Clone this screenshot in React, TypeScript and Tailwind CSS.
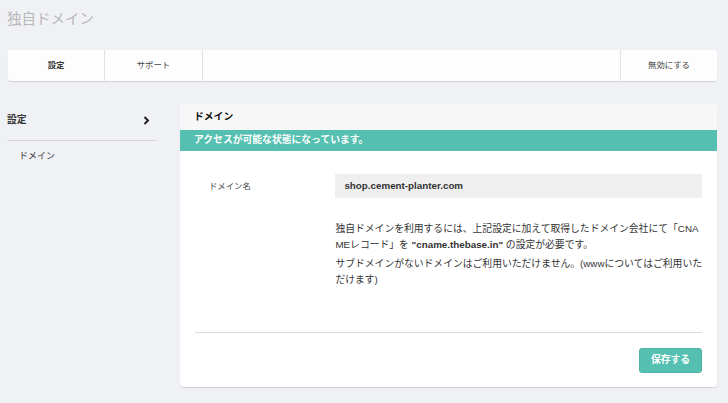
export default function App() {
  return (
    <div className="min-h-screen bg-[#f0f1f5] font-['Liberation_Sans','Noto_Sans_CJK_JP',sans-serif] text-[#333]">
      <div className="pl-[8px] pr-[11px]">
        <h1 className="h-[50px] pt-[9px] -ml-[1px] text-[14.5px] leading-[20px] text-[#b8b8b8]">独自ドメイン</h1>

        <nav className="flex h-[31px] rounded-[3px] bg-[#fdfdfd] shadow-[0_1px_1px_rgba(0,0,0,0.13)]">
          <a className="flex w-[97px] items-center justify-center border-r border-[#e3e3e3] text-[8.4px] font-bold text-[#333]">
            設定
          </a>
          <a className="flex w-[98px] items-center justify-center border-r border-[#e3e3e3] text-[8.4px] text-[#444]">
            サポート
          </a>
          <div className="flex-1" />
          <a className="flex w-[97px] items-center justify-center border-l border-[#e3e3e3] text-[8.4px] text-[#444]">
            無効にする
          </a>
        </nav>

        <div className="mt-[23px] flex">
          <aside className="-ml-[1px] w-[150px] shrink-0">
            <div className="flex h-[37px] items-center justify-between border-b border-[#d8d8d8] pb-[3px]">
              <span className="text-[9.8px] font-bold text-[#333]">設定</span>
              <svg width="7" height="9" viewBox="0 0 7 9" className="mr-[7px]">
                <path d="M1.5 1 L5 4.5 L1.5 8" fill="none" stroke="#222" strokeWidth="2" />
              </svg>
            </div>
            <div className="pl-[12px] pt-[9px] text-[9px] text-[#333]">ドメイン</div>
          </aside>

          <section className="ml-[23px] flex-1 overflow-hidden rounded-[4px] bg-white shadow-[0_1px_1px_rgba(0,0,0,0.13)]">
            <header className="flex h-[26px] items-center bg-[#f7f7f7] px-[14px] pt-[1px] text-[9.8px] font-bold text-[#111]">
              ドメイン
            </header>
            <div className="flex h-[21px] items-center bg-[#55bfb1] px-[14px] text-[9.8px] font-bold text-white">
              アクセスが可能な状態になっています。
            </div>

            <div className="px-[15px] pt-[23px]">
              <div className="flex">
                <div className="w-[141px] pl-[14px] pt-[6px] text-[8.4px] text-[#444]">ドメイン名</div>
                <div className="flex-1">
                  <div className="flex h-[24px] items-center bg-[#efefef] pl-[9px] text-[9.8px] font-bold text-[#333]">
                    shop.cement-planter.com
                  </div>
                  <div className="mt-[23px] whitespace-nowrap text-[9.8px] leading-[16px] text-[#333]">
                    <p>
                      独自ドメインを利用するには、上記設定に加えて取得したドメイン会社にて「CNA
                      <br />
                      MEレコード」を <b>"cname.thebase.in"</b> の設定が必要です。
                    </p>
                    <p className="mt-[3px]">
                      サブドメインがないドメインはご利用いただけません。(wwwについてはご利用いた
                      <br />
                      だけます)
                    </p>
                  </div>
                </div>
              </div>

              <div className="mt-[44px] border-t border-[#dcdcdc]" />

              <div className="flex justify-end pb-[14px] pt-[15px]">
                <button className="h-[25px] w-[63px] rounded-[3px] border border-[#4cb3a5] bg-[#55bfb1] text-[9.8px] font-bold text-white">
                  保存する
                </button>
              </div>
            </div>
          </section>
        </div>
      </div>
    </div>
  );
}
